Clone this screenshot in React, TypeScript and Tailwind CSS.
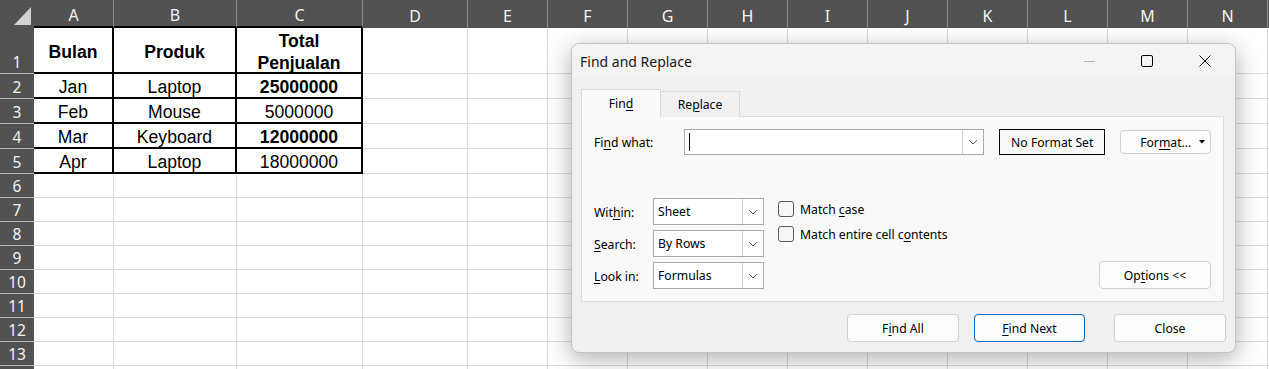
import React from "react";

const COLS = ["A", "B", "C", "D", "E", "F", "G", "H", "I", "J", "K", "L", "M", "N"];

type Cell = { t: string; b?: boolean };
const TABLE: Cell[][] = [
  [{ t: "Bulan", b: true }, { t: "Produk", b: true }, { t: "Total\nPenjualan", b: true }],
  [{ t: "Jan" }, { t: "Laptop" }, { t: "25000000", b: true }],
  [{ t: "Feb" }, { t: "Mouse" }, { t: "5000000" }],
  [{ t: "Mar" }, { t: "Keyboard" }, { t: "12000000", b: true }],
  [{ t: "Apr" }, { t: "Laptop" }, { t: "18000000" }],
];

const UI = { fontFamily: '"Noto Sans", "Open Sans", sans-serif' };
const ARIAL = { fontFamily: '"Liberation Sans", Arial, sans-serif' };

function U({ children }: { children: React.ReactNode }) {
  return <span className="underline underline-offset-[2px] decoration-[1px]">{children}</span>;
}

function Chevron() {
  return (
    <svg width="10" height="6" viewBox="0 0 10 6" fill="none">
      <path d="M1 1 L5 5 L9 1" stroke="#5a5a5a" strokeWidth="1" />
    </svg>
  );
}

function Select({ value }: { value: string }) {
  return (
    <div className="flex h-[27px] w-[111px] border border-[#a8a8a8] bg-white">
      <div className="flex flex-1 items-center pl-[4px] pt-[2px] text-[12.2px] text-black">{value}</div>
      <div className="flex w-[21px] items-center justify-center border-l border-[#d6d6d6] bg-white">
        <Chevron />
      </div>
    </div>
  );
}

function Btn({ children, w, primary }: { children: React.ReactNode; w: string; primary?: boolean }) {
  return (
    <div
      className={`flex h-[28px] items-center justify-center rounded-[4px] border bg-[#fdfdfd] pt-[3px] text-[12.2px] text-black ${w} ${
        primary ? "border-[#0067c0]" : "border-[#d0d0d0]"
      }`}
    >
      {children}
    </div>
  );
}

function Check({ children }: { children: React.ReactNode }) {
  return (
    <div className="flex h-[16px] items-center gap-[6px]">
      <div className="h-[16px] w-[16px] rounded-[3px] border border-[#5c5c5c] bg-[#f6f6f6]" />
      <span className="pt-[3px] text-[12.2px] text-black">{children}</span>
    </div>
  );
}

function Dialog() {
  return (
    <div
      className="absolute left-[571px] top-[43px] flex h-[310px] w-[665px] flex-col rounded-[8px] border border-[#c4c4c4] bg-[#f0f0f0] shadow-[0_6px_24px_rgba(0,0,0,0.32)]"
      style={UI}
    >
      {/* title bar */}
      <div className="flex h-[34px] items-center rounded-t-[8px] bg-[#f3f3f3]">
        <div className="pl-[8px] text-[14px] text-[#1a1a1a]">Find and Replace</div>
        <div className="ml-auto mr-[1px] flex">
          <div className="flex h-[34px] w-[58px] items-center justify-center">
            <div className="h-px w-[11px] bg-[#b4b4b4]" />
          </div>
          <div className="flex h-[34px] w-[58px] items-center justify-center">
            <div className="h-[12px] w-[12px] rounded-[2px] border border-black" />
          </div>
          <div className="flex h-[34px] w-[58px] items-center justify-center">
            <svg width="12" height="12" viewBox="0 0 12 12">
              <path d="M0.5 0.5 L11.5 11.5 M11.5 0.5 L0.5 11.5" stroke="#000" strokeWidth="1" />
            </svg>
          </div>
        </div>
      </div>

      {/* tabs */}
      <div className="relative z-10 -mb-px ml-[9px] mt-[11px] flex items-end">
        <div className="flex h-[28px] w-[80px] items-center justify-center border border-b-0 border-[#d9d9d9] bg-[#f9f9f9] pt-[2px] text-[12.2px] text-black">
          Fin<U>d</U>
        </div>
        <div className="flex h-[26px] w-[79px] items-center justify-center border border-b-0 border-l-0 border-[#d9d9d9] bg-[#f0f0f0] pt-[2px] text-[12.2px] text-black">
          Re<U>p</U>lace
        </div>
      </div>

      {/* panel */}
      <div className="ml-[9px] flex h-[186px] w-[643px] flex-col border border-[#dcdcdc] bg-[#f9f9f9] pl-[12px] pr-[12px] pt-[12px]">
        <div className="flex items-center">
          <div className="w-[90px] pt-[3px] text-[12.2px] text-black">
            Fi<U>n</U>d what:
          </div>
          <div className="flex h-[26px] w-[301px] border border-[#a8a8a8] bg-white">
            <div className="flex flex-1 items-center pl-[4px]">
              <div className="h-[18px] w-px bg-black" />
            </div>
            <div className="flex w-[21px] items-center justify-center border-l border-[#d6d6d6]">
              <Chevron />
            </div>
          </div>
          <div className="ml-[15px] flex h-[26px] w-[106px] items-center justify-center border border-black pt-[2px] text-[12.2px] text-black">
            No Format Set
          </div>
          <div className="ml-[15px] flex h-[24px] w-[91px] items-center rounded-[4px] border border-[#d0d0d0] bg-[#fdfdfd] text-[12.2px] text-black">
            <span className="ml-[19px] pt-[2px]">
              For<U>m</U>at...
            </span>
            <svg className="ml-auto mr-[5px]" width="6" height="4" viewBox="0 0 6 4">
              <path d="M0 0 L6 0 L3 3.5 Z" fill="#000" />
            </svg>
          </div>
        </div>

        <div className="mt-[43px] flex">
          <div className="flex flex-col gap-[5px]">
            <div className="flex items-center">
              <div className="w-[59px] pt-[3px] text-[12.2px] text-black">
                Wit<U>h</U>in:
              </div>
              <Select value="Sheet" />
            </div>
            <div className="flex items-center">
              <div className="w-[59px] pt-[3px] text-[12.2px] text-black">
                <U>S</U>earch:
              </div>
              <Select value="By Rows" />
            </div>
            <div className="flex items-center">
              <div className="w-[59px] pt-[3px] text-[12.2px] text-black">
                <U>L</U>ook in:
              </div>
              <Select value="Formulas" />
            </div>
          </div>
          <div className="ml-[14px] flex flex-col gap-[9px] pt-[3px]">
            <Check>
              Match <U>c</U>ase
            </Check>
            <Check>
              Match entire cell c<U>o</U>ntents
            </Check>
          </div>
          <div className="ml-auto self-end">
            <Btn w="w-[112px]">
              Op<U>t</U>ions &lt;&lt;
            </Btn>
          </div>
        </div>
      </div>

      {/* bottom buttons */}
      <div className="mr-[9px] mt-[12px] flex justify-end">
        <Btn w="w-[112px]">
          F<U>i</U>nd All
        </Btn>
        <div className="ml-[15px]">
          <Btn w="w-[111px]" primary>
            <U>F</U>ind Next
          </Btn>
        </div>
        <div className="ml-[29px]">
          <Btn w="w-[112px]">Close</Btn>
        </div>
      </div>
    </div>
  );
}

export default function App() {
  const rowCount = 14;
  return (
    <div className="relative h-[369px] w-[1269px] overflow-hidden bg-white">
      <div className="grid grid-cols-[34px_80px_123px_126px_105px_repeat(10,80px)_1fr] grid-rows-[28px_46px_repeat(4,25px)_repeat(9,24px)]">
        {/* header row */}
        <div className="relative bg-[#525252]">
          <svg className="absolute left-0 top-0" width="34" height="28" viewBox="0 0 34 28">
            <polygon points="31,7 31,25 14,25" fill="#d2d2d2" />
          </svg>
        </div>
        {COLS.map((c, i) => (
          <div
            key={c}
            className={`flex items-center justify-center border-r border-[#8c8c8c] bg-[#525252] pt-[3px] text-[16px] text-[#f2f2f2] ${
              i < 3 ? "border-b-2 border-b-black" : ""
            }`}
            style={UI}
          >
            {c}
          </div>
        ))}
        <div className="bg-[#525252]" />

        {Array.from({ length: rowCount }).map((_, r) => (
          <React.Fragment key={r}>
            <div
              className="flex items-end justify-center border-b border-[#b8b8b8] bg-[#525252] text-[15.5px] leading-[22px] text-[#f2f2f2]"
              style={UI}
            >
              {r < 13 ? r + 1 : ""}
            </div>
            {COLS.map((c, ci) => {
              const inTable = r < 5 && ci < 3;
              if (inTable) {
                const cell = TABLE[r][ci];
                return (
                  <div
                    key={c}
                    className={`flex items-center justify-center whitespace-pre-line border-b-2 border-r-2 border-black bg-white pt-[3px] text-center text-[17.6px] leading-[22px] text-black ${
                      cell.b ? "font-bold" : ""
                    }`}
                    style={ARIAL}
                  >
                    {cell.t}
                  </div>
                );
              }
              return <div key={c} className="border-b border-r border-[#dadada] bg-white" />;
            })}
            <div className="border-b border-[#dadada] bg-white" />
          </React.Fragment>
        ))}
      </div>

      <Dialog />
    </div>
  );
}
